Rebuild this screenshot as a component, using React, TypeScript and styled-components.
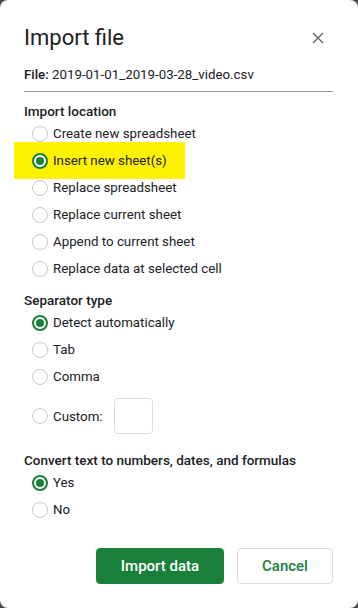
import styled, { createGlobalStyle } from "styled-components";

const GlobalStyle = createGlobalStyle`
  html, body {
    margin: 0;
    padding: 0;
    background: #4a4a4a;
  }
  body {
    font-family: Roboto, "Liberation Sans", Arial, sans-serif;
    color: #202124;
  }
`;

const Dialog = styled.div`
  width: 358px;
  height: 608px;
  box-sizing: border-box;
  background: #ffffff;
  border-radius: 8px;
  padding: 24px 25px 0 24px;
  display: flex;
  flex-direction: column;
`;

const Header = styled.div`
  display: flex;
  align-items: center;
  justify-content: space-between;
  height: 28px;
`;

const Title = styled.h1`
  margin: 0;
  font-size: 22px;
  font-weight: 400;
  line-height: 28px;
  color: #202124;
`;

const CloseButton = styled.button`
  border: none;
  background: none;
  padding: 0;
  margin-right: 8px;
  width: 14px;
  height: 14px;
  display: flex;
  align-items: center;
  justify-content: center;
  cursor: pointer;
`;

const FileLine = styled.div`
  margin-top: 13px;
  padding-bottom: 6px;
  border-bottom: 1px solid #9e9e9e;
  font-size: 13.3px;
  line-height: 20px;

  b {
    font-weight: 500;
  }
`;

const Section = styled.div<{ $gap?: number }>`
  margin-top: ${({ $gap }) => $gap ?? 10}px;
  display: flex;
  flex-direction: column;
`;

const SectionLabel = styled.div`
  font-size: 13.5px;
  font-weight: 500;
  line-height: 18px;
`;

const Row = styled.label<{ $highlight?: boolean; $tall?: boolean }>`
  position: relative;
  isolation: isolate;
  display: flex;
  align-items: center;
  gap: 5px;
  height: ${({ $tall }) => ($tall ? 36 : 27)}px;
  margin-top: ${({ $tall }) => ($tall ? 8 : 0)}px;
  padding-left: 8px;
  font-size: 13.3px;
  color: #202124;

  ${({ $highlight }) =>
    $highlight &&
    `
    &::before {
      content: "";
      position: absolute;
      left: -10px;
      top: -5px;
      width: 171px;
      height: 37px;
      background: #fff200;
      z-index: -1;
    }
  `}
`;

const Circle = styled.span<{ $checked?: boolean }>`
  width: 16px;
  height: 16px;
  box-sizing: border-box;
  border-radius: 50%;
  border: ${({ $checked }) =>
    $checked ? "2px solid #188038" : "1.5px solid #c8c8c8"};
  background: #fff;
  display: flex;
  align-items: center;
  justify-content: center;

  &::after {
    content: "";
    width: 8px;
    height: 8px;
    border-radius: 50%;
    background: ${({ $checked }) => ($checked ? "#188038" : "transparent")};
  }
`;

const CustomInput = styled.input`
  margin-left: 6px;
  width: 39px;
  height: 36px;
  box-sizing: border-box;
  border: 1px solid #dadce0;
  border-radius: 4px;
  outline: none;
`;

const Footer = styled.div`
  margin-top: 25px;
  display: flex;
  justify-content: flex-end;
  gap: 13px;
`;

const Button = styled.button<{ $primary?: boolean }>`
  height: 36px;
  width: ${({ $primary }) => ($primary ? 128 : 96)}px;
  box-sizing: border-box;
  border-radius: 4px;
  font-family: Roboto, "Liberation Sans", Arial, sans-serif;
  font-size: 15px;
  font-weight: 500;
  cursor: pointer;
  border: 1px solid ${({ $primary }) => ($primary ? "#188038" : "#dadce0")};
  background: ${({ $primary }) => ($primary ? "#188038" : "#ffffff")};
  color: ${({ $primary }) => ($primary ? "#ffffff" : "#188038")};
`;

type Option = { label: string; checked?: boolean; highlight?: boolean };

const locations: Option[] = [
  { label: "Create new spreadsheet" },
  { label: "Insert new sheet(s)", checked: true, highlight: true },
  { label: "Replace spreadsheet" },
  { label: "Replace current sheet" },
  { label: "Append to current sheet" },
  { label: "Replace data at selected cell" },
];

const separators: Option[] = [
  { label: "Detect automatically", checked: true },
  { label: "Tab" },
  { label: "Comma" },
];

const convert: Option[] = [{ label: "Yes", checked: true }, { label: "No" }];

const RadioList = ({ options }: { options: Option[] }) => (
  <>
    {options.map((o) => (
      <Row key={o.label} $highlight={o.highlight}>
        <Circle $checked={o.checked} />
        {o.label}
      </Row>
    ))}
  </>
);

export default function App() {
  return (
    <>
      <GlobalStyle />
      <Dialog>
        <Header>
          <Title>Import file</Title>
          <CloseButton aria-label="Close">
            <svg width="12" height="12" viewBox="0 0 12 12">
              <path
                d="M1 1 L11 11 M11 1 L1 11"
                stroke="#5f6368"
                strokeWidth="1.4"
                fill="none"
              />
            </svg>
          </CloseButton>
        </Header>

        <FileLine>
          <b>File:</b> 2019-01-01_2019-03-28_video.csv
        </FileLine>

        <Section>
          <SectionLabel>Import location</SectionLabel>
          <RadioList options={locations} />
        </Section>

        <Section $gap={9}>
          <SectionLabel>Separator type</SectionLabel>
          <RadioList options={separators} />
          <Row $tall>
            <Circle />
            Custom:
            <CustomInput />
          </Row>
        </Section>

        <Section $gap={17}>
          <SectionLabel>Convert text to numbers, dates, and formulas</SectionLabel>
          <RadioList options={convert} />
        </Section>

        <Footer>
          <Button $primary>Import data</Button>
          <Button>Cancel</Button>
        </Footer>
      </Dialog>
    </>
  );
}
